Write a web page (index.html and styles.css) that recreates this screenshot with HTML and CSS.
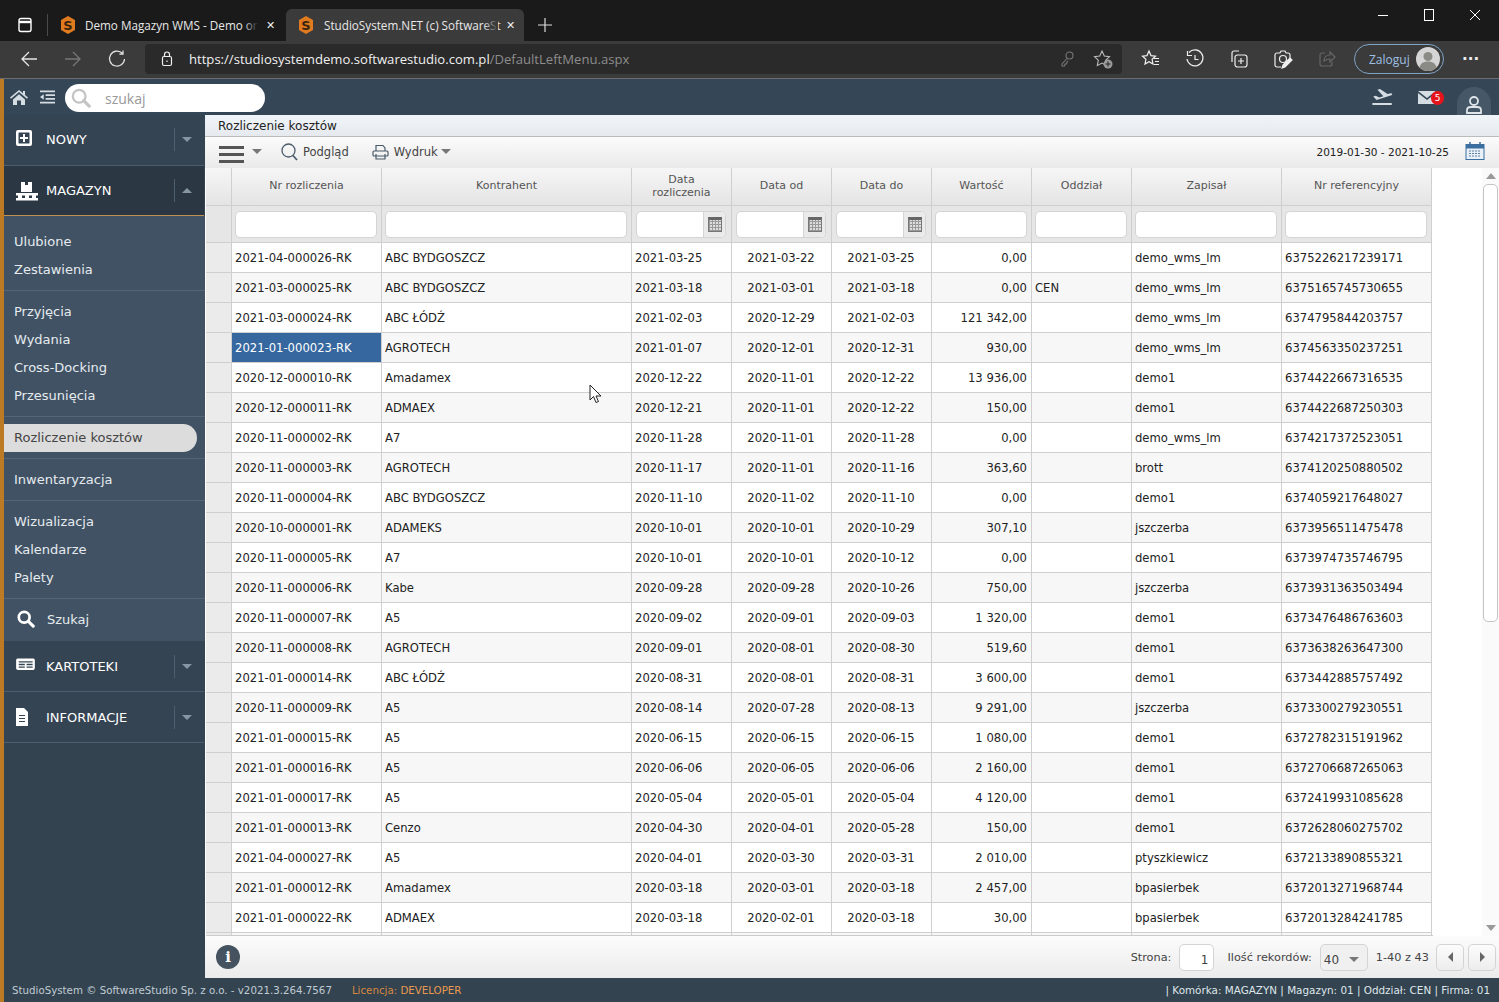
FILE: index.html
```html
<!DOCTYPE html>
<html lang="pl">
<head>
    <meta charset="UTF-8">
    <meta name="viewport" content="width=device-width, initial-scale=1.0">
    <title>StudioSystem.NET (c) SoftwareStudio</title>
    <link rel="stylesheet" href="styles.css">
</head>
<body>
    <div class="tabstrip">
        <svg class="tab-actions" width="16" height="16" viewBox="0 0 16 16" fill="none" stroke="#fff" stroke-width="1.4"><rect x="2" y="1.5" width="12" height="13" rx="2"/><path d="M2 5h12" stroke-width="2.4"/></svg>
        <span class="tab-sep"></span>
        <div class="tab">
            <svg class="favicon" width="16" height="20" viewBox="0 0 16 20"><polygon points="8,1 15,5 15,15 8,19 1,15 1,5" fill="#e07a1f"/><text x="8" y="15" text-anchor="middle" class="favicon-s">S</text></svg>
            <span class="tab-title">Demo Magazyn WMS - Demo or</span>
            <span class="tab-fade"></span>
            <span class="tab-close">✕</span>
        </div>
        <div class="tab tab-active">
            <svg class="favicon" width="16" height="20" viewBox="0 0 16 20"><polygon points="8,1 15,5 15,15 8,19 1,15 1,5" fill="#e07a1f"/><text x="8" y="15" text-anchor="middle" class="favicon-s">S</text></svg>
            <span class="tab-title">StudioSystem.NET (c) SoftwareSt</span>
            <span class="tab-fade"></span>
            <span class="tab-close">✕</span>
        </div>
        <svg class="tab-new" width="16" height="16" viewBox="0 0 16 16" stroke="#ddd" stroke-width="1.2"><path d="M8 1v14M1 8h14"/></svg>
        <div class="window-controls">
            <svg width="12" height="12" viewBox="0 0 12 12" stroke="#fff"><path d="M1 6.5h10"/></svg>
            <svg width="12" height="12" viewBox="0 0 12 12" fill="none" stroke="#fff"><rect x="1.5" y="0.5" width="9" height="11"/></svg>
            <svg width="12" height="12" viewBox="0 0 12 12" stroke="#fff"><path d="M1 1l10 10M11 1L1 11"/></svg>
        </div>
    </div>

    <div class="addressbar">
        <svg class="nav-icon" width="18" height="18" viewBox="0 0 18 18" fill="none" stroke="#e6e6e6" stroke-width="1.3"><path d="M17 9H2M9 2L2 9l7 7"/></svg>
        <svg class="nav-icon" width="18" height="18" viewBox="0 0 18 18" fill="none" stroke="#777" stroke-width="1.3"><path d="M1 9h15M9 2l7 7-7 7"/></svg>
        <svg class="nav-icon" width="18" height="18" viewBox="0 0 18 18" fill="none" stroke="#e6e6e6" stroke-width="1.2"><path d="M14.5 3.5A7.5 7.5 0 1 0 16.5 9M15 0.5v3.6h-3.6"/></svg>
        <div class="urlbox">
            <svg class="url-lock" width="12" height="16" viewBox="0 0 12 16" fill="none" stroke="#eee" stroke-width="1.2"><rect x="1.5" y="5.5" width="9" height="9" rx="1.5"/><path d="M3.5 5.5V3.5a2.5 2.5 0 0 1 5 0v2"/><path d="M6 9.5V11"/></svg>
            <span class="url-text">https://studiosystemdemo.softwarestudio.com.pl<span class="url-dim">/DefaultLeftMenu.aspx</span></span>
            <svg class="url-key" width="14" height="16" viewBox="0 0 14 16" fill="none" stroke="#777" stroke-width="1.1"><circle cx="9.5" cy="4.5" r="3.5"/><path d="M7 7.5L2 13v2h2.5l.5-2h1.500l.5-2 1-1"/></svg>
            <svg class="url-star" width="20" height="20" viewBox="0 0 20 20" fill="none" stroke="#bbb" stroke-width="1.1"><path d="M9 2l2.300 5 5.200.6-3.800 3.600 1 5.300L9 14l-4.700 2.500 1-5.300L1.500 7.600 6.700 7z"/><circle cx="15" cy="15" r="4.5" fill="#999" stroke="none"/><path d="M15 12.5v5M12.5 15h5" stroke="#2a2a2a"/></svg>
        </div>
        <div class="browser-tools">
            <svg width="20" height="20" viewBox="0 0 20 20" fill="none" stroke="#eee" stroke-width="1.2"><path d="M8 2l2 4.600 4.500.5-3.400 3.200.9 4.800L8 12.700l-4 2.400.9-4.800L1.500 7.100 6 6.600z"/><path d="M13 9.5h5M14 12.500h4M13 15.500h5"/></svg>
            <svg width="20" height="20" viewBox="0 0 20 20" fill="none" stroke="#eee" stroke-width="1.2"><path d="M4 3.500A8 8 0 1 1 2 10"/><path d="M2.500 2v4.500H7"/><path d="M10 6v4.500h3.500"/></svg>
            <svg width="20" height="20" viewBox="0 0 20 20" fill="none" stroke="#eee" stroke-width="1.2"><path d="M3 13V4a2 2 0 0 1 2-2h5"/><rect x="6" y="6" width="12" height="12" rx="2.5"/><path d="M12 9v6M9 12h6"/></svg>
            <svg width="20" height="20" viewBox="0 0 20 20" fill="none" stroke="#eee" stroke-width="1.2"><path d="M7 4l1-2h4l1 2h2a2 2 0 0 1 2 2v3M8 18H4a2 2 0 0 1-2-2V6a2 2 0 0 1 2-2h3"/><circle cx="10" cy="10" r="3.5"/><path d="M10 16l7-7 2 2-7 7-3 1z" fill="#eee"/></svg>
            <svg width="20" height="20" viewBox="0 0 20 20" fill="none" stroke="#666" stroke-width="1.2"><path d="M8 4H5a2 2 0 0 0-2 2v9a2 2 0 0 0 2 2h8a2 2 0 0 0 2-2v-2"/><path d="M7 12c0-4 3-6 6-6V3l5 5-5 5v-3c-2 0-4 .5-6 2z"/></svg>
        </div>
        <div class="profile-pill">
            <span>Zaloguj</span>
            <svg width="24" height="24" viewBox="0 0 24 24"><circle cx="12" cy="12" r="12" fill="#d5d5d5"/><circle cx="12" cy="9.5" r="4.5" fill="#8b8b85"/><path d="M3.500 20.500c1-4.500 4.500-6 8.500-6s7.500 1.500 8.500 6a12 12 0 0 1-17 0z" fill="#8b8b85"/></svg>
        </div>
        <span class="browser-menu">···</span>
    </div>

    <div class="app">
        <div class="topbar">
            <svg class="top-icon" width="18" height="16" viewBox="0 0 18 16" fill="#d5dce2"><path d="M9 1L0 8.500l1 1.200L9 3l8 6.700 1-1.200-3-2.500V2h-2v2.300zM3 10.500V16h4v-4.500h4V16h4v-5.500L9 5.200z"/></svg>
            <svg class="top-icon top-list" width="15" height="14" viewBox="0 0 16 14" fill="#d5dce2"><path d="M0 0h16v2H0zM6 4h10v2H6zM6 8h10v2H6zM0 12h16v2H0zM4 4v6L0 7z"/></svg>
            <div class="top-search">
                <svg width="20" height="20" viewBox="0 0 22 22" fill="none" stroke="#c4c4c4"><circle cx="9" cy="9" r="7" stroke-width="2.5"/><path d="M14 14l6 6" stroke-width="3.5" stroke-linecap="round"/></svg>
                <span>szukaj</span>
            </div>
            <div class="top-right">
                <svg width="21" height="16" viewBox="0 0 24 19" fill="#d5dce2"><path d="M0 16.500h23V19H0zM1 9l3-1 4 2 5-1.500L6 1l3-1 9 6 4-1c2 0 2 2 .5 2.500L5 13z"/></svg>
                <div class="mail">
                    <svg width="18" height="13" viewBox="0 0 18 13" fill="#d5dce2"><path d="M0 0h18L9 7zM0 2l9 7 9-7v11H0z"/></svg>
                    <span class="mail-badge">5</span>
                </div>
                <div class="user-btn">
                    <svg width="16" height="18" viewBox="0 0 16 18" fill="none" stroke="#dfe5ea" stroke-width="1.8"><circle cx="8" cy="5" r="4"/><path d="M1 17v-3c0-2 2-3 4-3h6c2 0 4 1 4 3v3z"/></svg>
                </div>
            </div>
        </div>

        <div class="layout">
            <nav class="sidebar">
                <div class="nav-head">
                    <svg class="nav-head-icon" width="22" height="20" viewBox="2 1 22 20" fill="#fff"><path fill-rule="evenodd" d="M4 2h12a2 2 0 0 1 2 2v12a2 2 0 0 1-2 2H4a2 2 0 0 1-2-2V4a2 2 0 0 1 2-2zm1 2.500a.5.5 0 0 0-.5.5v10a.5.5 0 0 0 .5.5h10a.5.5 0 0 0 .5-.5V5a.5.5 0 0 0-.5-.5zM9 6h2v3h3v2h-3v3H9v-3H6V9h3z"/></svg>
                    <span class="nav-head-label">NOWY</span>
                    <span class="nav-caret"><i class="caret-down"></i></span>
                </div>
                <div class="nav-head nav-head-open">
                    <svg class="nav-head-icon" width="22" height="20" viewBox="0 0 22 20" fill="#fff"><path d="M5 1h4v3h3V1h4v10H5zM0 12h22v2.500H0zM0 17h22v2.500H0zM2 14h4v3H2zM9 14h4v3H9zM16 14h4v3h-4z"/></svg>
                    <span class="nav-head-label">MAGAZYN</span>
                    <span class="nav-caret"><i class="caret-up"></i></span>
                </div>
                <div class="nav-group nav-group-first">
                    <a>Ulubione</a>
                    <a>Zestawienia</a>
                </div>
                <div class="nav-group">
                    <a>Przyjęcia</a>
                    <a>Wydania</a>
                    <a>Cross-Docking</a>
                    <a>Przesunięcia</a>
                </div>
                <div class="nav-group">
                    <a class="nav-current">Rozliczenie kosztów</a>
                </div>
                <div class="nav-group">
                    <a>Inwentaryzacja</a>
                </div>
                <div class="nav-group">
                    <a>Wizualizacja</a>
                    <a>Kalendarze</a>
                    <a>Palety</a>
                </div>
                <div class="nav-search">
                    <svg width="18" height="18" viewBox="0 0 20 20" fill="none" stroke="#fff"><circle cx="8" cy="8" r="6" stroke-width="3"/><path d="M12.500 12.500l5.500 5.500" stroke-width="3.5" stroke-linecap="round"/></svg>
                    <span>Szukaj</span>
                </div>
                <div class="nav-head">
                    <svg class="nav-head-icon" width="22" height="20" viewBox="0 0 25 23" fill="#fff"><path fill-rule="evenodd" d="M2 3h18a2 2 0 0 1 1.500 1.500v10A2 2 0 0 1 20 16H2a2 2 0 0 1-2-1.500v-10A2 2 0 0 1 2 3zm1 3v1.500h16V6zm0 3v1.500h7V9zm9 0v1.500h7V9zm-9 3v1.500h7V12zm9 0v1.500h7V12z"/></svg>
                    <span class="nav-head-label">KARTOTEKI</span>
                    <span class="nav-caret"><i class="caret-down"></i></span>
                </div>
                <div class="nav-head">
                    <svg class="nav-head-icon" width="22" height="20" viewBox="2 0 22 20" fill="#fff"><path fill-rule="evenodd" d="M2 1h8l4 4v14H2zM5 8v1h6V8zm0 3v1h6v-1zm0 3v1h6v-1z"/></svg>
                    <span class="nav-head-label">INFORMACJE</span>
                    <span class="nav-caret"><i class="caret-down"></i></span>
                </div>
            </nav>

            <main class="content">
                <div class="page-title">Rozliczenie kosztów</div>
                <div class="toolbar">
                    <span class="hamburger"><i></i><i></i><i></i></span>
                    <i class="caret-gray hamburger-caret"></i>
                    <svg class="tool-icon" width="17" height="18" viewBox="0 0 17 18" fill="none" stroke="#4a5b6b" stroke-width="1.3"><circle cx="7.5" cy="7.5" r="6.5"/><path d="M12 12.500l4 4.500" stroke-width="1.8"/></svg>
                    <span class="tool-label">Podgląd</span>
                    <svg class="tool-icon tool-print" width="17" height="16" viewBox="0 0 17 16" fill="none" stroke="#4a5b6b" stroke-width="1.2"><path d="M4 7V1.500h7L13 4v3"/><rect x="1" y="7" width="15" height="5" rx="1"/><path d="M4 10v5h9v-5"/></svg>
                    <span class="tool-label">Wydruk</span>
                    <i class="caret-gray"></i>
                    <span class="date-range">2019-01-30 - 2021-10-25</span>
                    <svg class="date-icon" width="20" height="18" viewBox="0 0 20 18"><rect x="1" y="2.5" width="18" height="15" fill="#e8f1fa" stroke="#3b6f9f"/><rect x="1" y="2.5" width="18" height="4" fill="#3b6f9f"/><path d="M5 0v4M15 0v4" stroke="#3b6f9f" stroke-width="1.5"/><path d="M4 9h12M4 11.500h12M4 14h12" stroke="#5f7f9f" stroke-dasharray="2 1"/></svg>
                </div>

                <div class="grid-area">
                    <div class="grid-wrap">
                        <table class="grid">
                            <colgroup>
                                <col class="w-gutter"><col class="w-150"><col class="w-250"><col class="w-100"><col class="w-100"><col class="w-100"><col class="w-100"><col class="w-100"><col class="w-150"><col class="w-150">
                            </colgroup>
                            <thead>
                                <tr class="head-row">
                                    <th></th><th>Nr rozliczenia</th><th>Kontrahent</th><th>Data<br>rozliczenia</th><th>Data od</th><th>Data do</th><th>Wartość</th><th>Oddział</th><th>Zapisał</th><th>Nr referencyjny</th>
                                </tr>
                                <tr class="filter-row">
                                    <td></td>
                                    <td><div class="filter"></div></td>
                                    <td><div class="filter"></div></td>
                                    <td><div class="filter filter-date"><span class="cal-btn"><i class="cal-glyph"></i></span></div></td>
                                    <td><div class="filter filter-date"><span class="cal-btn"><i class="cal-glyph"></i></span></div></td>
                                    <td><div class="filter filter-date"><span class="cal-btn"><i class="cal-glyph"></i></span></div></td>
                                    <td><div class="filter"></div></td>
                                    <td><div class="filter"></div></td>
                                    <td><div class="filter"></div></td>
                                    <td><div class="filter"></div></td>
                                </tr>
                            </thead>
                            <tbody>
                                <tr><td></td><td>2021-04-000026-RK</td><td>ABC BYDGOSZCZ</td><td>2021-03-25</td><td class="c">2021-03-22</td><td class="c">2021-03-25</td><td class="r">0,00</td><td></td><td>demo_wms_lm</td><td>6375226217239171</td></tr>
                                <tr><td></td><td>2021-03-000025-RK</td><td>ABC BYDGOSZCZ</td><td>2021-03-18</td><td class="c">2021-03-01</td><td class="c">2021-03-18</td><td class="r">0,00</td><td>CEN</td><td>demo_wms_lm</td><td>6375165745730655</td></tr>
                                <tr><td></td><td>2021-03-000024-RK</td><td>ABC ŁÓDŹ</td><td>2021-02-03</td><td class="c">2020-12-29</td><td class="c">2021-02-03</td><td class="r">121 342,00</td><td></td><td>demo_wms_lm</td><td>6374795844203757</td></tr>
                                <tr><td></td><td class="selected">2021-01-000023-RK</td><td>AGROTECH</td><td>2021-01-07</td><td class="c">2020-12-01</td><td class="c">2020-12-31</td><td class="r">930,00</td><td></td><td>demo_wms_lm</td><td>6374563350237251</td></tr>
                                <tr><td></td><td>2020-12-000010-RK</td><td>Amadamex</td><td>2020-12-22</td><td class="c">2020-11-01</td><td class="c">2020-12-22</td><td class="r">13 936,00</td><td></td><td>demo1</td><td>6374422667316535</td></tr>
                                <tr><td></td><td>2020-12-000011-RK</td><td>ADMAEX</td><td>2020-12-21</td><td class="c">2020-11-01</td><td class="c">2020-12-22</td><td class="r">150,00</td><td></td><td>demo1</td><td>6374422687250303</td></tr>
                                <tr><td></td><td>2020-11-000002-RK</td><td>A7</td><td>2020-11-28</td><td class="c">2020-11-01</td><td class="c">2020-11-28</td><td class="r">0,00</td><td></td><td>demo_wms_lm</td><td>6374217372523051</td></tr>
                                <tr><td></td><td>2020-11-000003-RK</td><td>AGROTECH</td><td>2020-11-17</td><td class="c">2020-11-01</td><td class="c">2020-11-16</td><td class="r">363,60</td><td></td><td>brott</td><td>6374120250880502</td></tr>
                                <tr><td></td><td>2020-11-000004-RK</td><td>ABC BYDGOSZCZ</td><td>2020-11-10</td><td class="c">2020-11-02</td><td class="c">2020-11-10</td><td class="r">0,00</td><td></td><td>demo1</td><td>6374059217648027</td></tr>
                                <tr><td></td><td>2020-10-000001-RK</td><td>ADAMEKS</td><td>2020-10-01</td><td class="c">2020-10-01</td><td class="c">2020-10-29</td><td class="r">307,10</td><td></td><td>jszczerba</td><td>6373956511475478</td></tr>
                                <tr><td></td><td>2020-11-000005-RK</td><td>A7</td><td>2020-10-01</td><td class="c">2020-10-01</td><td class="c">2020-10-12</td><td class="r">0,00</td><td></td><td>demo1</td><td>6373974735746795</td></tr>
                                <tr><td></td><td>2020-11-000006-RK</td><td>Kabe</td><td>2020-09-28</td><td class="c">2020-09-28</td><td class="c">2020-10-26</td><td class="r">750,00</td><td></td><td>jszczerba</td><td>6373931363503494</td></tr>
                                <tr><td></td><td>2020-11-000007-RK</td><td>A5</td><td>2020-09-02</td><td class="c">2020-09-01</td><td class="c">2020-09-03</td><td class="r">1 320,00</td><td></td><td>demo1</td><td>6373476486763603</td></tr>
                                <tr><td></td><td>2020-11-000008-RK</td><td>AGROTECH</td><td>2020-09-01</td><td class="c">2020-08-01</td><td class="c">2020-08-30</td><td class="r">519,60</td><td></td><td>demo1</td><td>6373638263647300</td></tr>
                                <tr><td></td><td>2021-01-000014-RK</td><td>ABC ŁÓDŹ</td><td>2020-08-31</td><td class="c">2020-08-01</td><td class="c">2020-08-31</td><td class="r">3 600,00</td><td></td><td>demo1</td><td>6373442885757492</td></tr>
                                <tr><td></td><td>2020-11-000009-RK</td><td>A5</td><td>2020-08-14</td><td class="c">2020-07-28</td><td class="c">2020-08-13</td><td class="r">9 291,00</td><td></td><td>jszczerba</td><td>6373300279230551</td></tr>
                                <tr><td></td><td>2021-01-000015-RK</td><td>A5</td><td>2020-06-15</td><td class="c">2020-06-15</td><td class="c">2020-06-15</td><td class="r">1 080,00</td><td></td><td>demo1</td><td>6372782315191962</td></tr>
                                <tr><td></td><td>2021-01-000016-RK</td><td>A5</td><td>2020-06-06</td><td class="c">2020-06-05</td><td class="c">2020-06-06</td><td class="r">2 160,00</td><td></td><td>demo1</td><td>6372706687265063</td></tr>
                                <tr><td></td><td>2021-01-000017-RK</td><td>A5</td><td>2020-05-04</td><td class="c">2020-05-01</td><td class="c">2020-05-04</td><td class="r">4 120,00</td><td></td><td>demo1</td><td>6372419931085628</td></tr>
                                <tr><td></td><td>2021-01-000013-RK</td><td>Cenzo</td><td>2020-04-30</td><td class="c">2020-04-01</td><td class="c">2020-05-28</td><td class="r">150,00</td><td></td><td>demo1</td><td>6372628060275702</td></tr>
                                <tr><td></td><td>2021-04-000027-RK</td><td>A5</td><td>2020-04-01</td><td class="c">2020-03-30</td><td class="c">2020-03-31</td><td class="r">2 010,00</td><td></td><td>ptyszkiewicz</td><td>6372133890855321</td></tr>
                                <tr><td></td><td>2021-01-000012-RK</td><td>Amadamex</td><td>2020-03-18</td><td class="c">2020-03-01</td><td class="c">2020-03-18</td><td class="r">2 457,00</td><td></td><td>bpasierbek</td><td>6372013271968744</td></tr>
                                <tr><td></td><td>2021-01-000022-RK</td><td>ADMAEX</td><td>2020-03-18</td><td class="c">2020-02-01</td><td class="c">2020-03-18</td><td class="r">30,00</td><td></td><td>bpasierbek</td><td>6372013284241785</td></tr>
                                <tr><td></td><td></td><td></td><td></td><td></td><td></td><td></td><td></td><td></td><td></td></tr>
                            </tbody>
                        </table>
                    </div>
                    <div class="scrollbar">
                        <i class="scroll-up"></i>
                        <div class="scroll-track"><div class="scroll-thumb"></div></div>
                        <i class="scroll-down"></i>
                    </div>
                </div>

                <div class="pager">
                    <span class="info-btn">i</span>
                    <span class="pager-label pager-first">Strona:</span>
                    <span class="page-input">1</span>
                    <span class="pager-label">Ilość rekordów:</span>
                    <span class="page-select">40<i class="caret-gray"></i></span>
                    <span class="pager-label">1-40 z 43</span>
                    <span class="page-btn"><i class="tri-left"></i></span>
                    <span class="page-btn"><i class="tri-right"></i></span>
                </div>
            </main>
        </div>

        <footer class="statusbar">
            <span>StudioSystem © SoftwareStudio Sp. z o.o. - v2021.3.264.7567</span>
            <span class="license">Licencja: <b>DEVELOPER</b></span>
            <span class="status-right">| Komórka: MAGAZYN | Magazyn: 01 | Oddział: CEN | Firma: 01</span>
        </footer>
    </div>

    <svg class="cursor" width="14" height="20" viewBox="0 0 14 20"><path d="M1 1v15l3.500-3.500L7 18.500l2.500-1-2.500-5.500h5z" fill="#fff" stroke="#222" stroke-width="1"/></svg>
</body>
</html>
```

FILE: styles.css
```css
* {
    box-sizing: border-box;
}
html, body {
    height: 100%;
}
body {
    margin: 0;
    display: flex;
    flex-direction: column;
    overflow: hidden;
    position: relative;
    font-family: "DejaVu Sans", sans-serif;
    font-size: 11.6px;
    color: #222;
    background-color: #fff;
}

/* browser chrome */
.tabstrip {
    height: 41px;
    flex: none;
    display: flex;
    align-items: flex-end;
    background-color: #1a1a1a;
    font-family: "Open Sans", sans-serif;
    color: #e8e8e8;
}
.tab-actions {
    margin: 0 14px 8px 17px;
}
.tab-sep {
    width: 1px;
    height: 22px;
    margin: 0 6px 5px 0;
    background-color: #4a4a4a;
}
.tab {
    position: relative;
    width: 232px;
    height: 32px;
    padding: 0 8px 0 6px;
    display: flex;
    align-items: center;
    border-radius: 6px 6px 0 0;
    font-size: 11.7px;
}
.tab-active {
    width: 238px;
    padding-left: 12px;
    background-color: #3b3b3b;
}
.favicon-s {
    font: bold 13px "DejaVu Sans", sans-serif;
    fill: #3a2410;
}
.tab-title {
    margin-left: 9px;
    width: 173px;
    white-space: nowrap;
}
.tab-active .tab-title {
    margin-left: 10px;
    width: 174px;
}
.tab-fade {
    width: 14px;
    height: 20px;
    margin-left: -14px;
    background: linear-gradient(to right, rgba(26,26,26,0), #1a1a1a);
}
.tab-active .tab-fade {
    background: linear-gradient(to right, rgba(59,59,59,0), #3b3b3b);
}
.tab-close {
    margin-left: 8px;
    font: 11px "DejaVu Sans", sans-serif;
    color: #eee;
}
.tab-new {
    margin: 0 0 8px 13px;
}
.window-controls {
    margin-left: auto;
    align-self: flex-start;
    padding: 9px 18px 0 0;
    display: flex;
    gap: 34px;
}
.addressbar {
    height: 38px;
    flex: none;
    display: flex;
    align-items: center;
    padding: 0 0 1px 20px;
    background-color: #3b3b3b;
    border-bottom: 1px solid #6d6d6d;
}
.nav-icon {
    margin-right: 26px;
}
.nav-icon:nth-child(3) {
    margin-right: 19px;
}
.urlbox {
    width: 977px;
    height: 30px;
    display: flex;
    align-items: center;
    padding: 0 9px 0 16px;
    background-color: #2a2a2a;
    border-radius: 4px;
    font-family: "Open Sans", sans-serif;
    font-size: 13.1px;
    color: #f0f0f0;
}
.url-text {
    margin-left: 16px;
}
.url-dim {
    color: #8d8d8d;
}
.url-key {
    margin-left: auto;
    margin-right: 19px;
}
.browser-tools {
    width: 232px;
    display: flex;
    gap: 24px;
    padding-left: 19px;
}
.profile-pill {
    width: 90px;
    height: 30px;
    display: flex;
    align-items: center;
    justify-content: space-between;
    padding: 0 3px 0 14px;
    border: 1px solid #7fa3c4;
    border-radius: 15px;
    font-family: "Open Sans", sans-serif;
    font-size: 12px;
    color: #9fc0e4;
}
.browser-menu {
    margin-left: 18px;
    font: bold 15px "DejaVu Sans", sans-serif;
    color: #eee;
}

/* application */
.app {
    flex: 1;
    min-height: 0;
    display: flex;
    flex-direction: column;
    border-left: 4px solid #bd7a24;
    background-color: #33434f;
}
.topbar {
    height: 36px;
    flex: none;
    display: flex;
    align-items: center;
    padding-left: 6px;
    background-color: #354657;
}
.top-icon {
    margin-right: 11px;
}
.top-list {
    margin-right: 10px;
    margin-left: 1px;
}
.top-search {
    width: 200px;
    height: 28px;
    margin-top: 2px;
    padding-left: 6px;
    display: flex;
    align-items: center;
    gap: 14px;
    background-color: #fff;
    border-radius: 14px;
    font-family: "Open Sans", sans-serif;
    font-size: 14px;
    color: #999;
}
.top-right {
    margin-left: auto;
    display: flex;
    align-items: center;
    gap: 25px;
}
.mail {
    position: relative;
    height: 13px;
    display: flex;
    margin-right: 4px;
}
.mail-badge {
    position: absolute;
    left: 13px;
    top: 0;
    width: 13px;
    height: 14px;
    border-radius: 7px;
    background-color: #e8141c;
    color: #fff;
    font-size: 9px;
    line-height: 14px;
    text-align: center;
}
.user-btn {
    width: 34px;
    height: 34px;
    margin: 8px 8px -6px -8px;
    padding-top: 9px;
    display: flex;
    justify-content: center;
    background-color: #465868;
    border-radius: 17px 17px 0 0;
}
.layout {
    flex: 1;
    min-height: 0;
    display: flex;
}

/* left menu */
.sidebar {
    width: 201px;
    flex: none;
    background-color: #33434f;
    font-size: 13px;
    color: #e6ebef;
}
.nav-head {
    height: 51px;
    display: flex;
    align-items: center;
    padding-left: 12px;
    background-color: #354452;
    border-bottom: 1px solid #4d5f6e;
    margin-right: 1px;
}
.nav-head:first-child {
    padding-bottom: 2px;
}
.nav-head-open {
    height: 50px;
    background-color: #2b3743;
    border-bottom: 1px solid #c09050;
}
.nav-head-icon {
    flex: none;
}
.nav-head-label {
    margin-left: 8px;
    font-size: 13px;
    color: #fff;
}
.nav-caret {
    margin-left: auto;
    margin-right: 6px;
    width: 24px;
    height: 23px;
    display: flex;
    align-items: center;
    justify-content: center;
    border-left: 1px solid #4d5f6e;
}
.caret-down, .caret-up {
    width: 0;
    height: 0;
    border-left: 5px solid transparent;
    border-right: 5px solid transparent;
}
.caret-down {
    border-top: 5px solid #8796a3;
}
.caret-up {
    border-bottom: 5px solid #8796a3;
}
.nav-group {
    padding: 7px 0 6px;
    background-color: #405264;
    border-bottom: 1px solid #536576;
}
.nav-group-first {
    padding-top: 12px;
}
.nav-group a {
    display: block;
    height: 28px;
    line-height: 28px;
    padding-left: 10px;
    color: #e6ebef;
}
.nav-group a.nav-current {
    width: 193px;
    background-color: #dcdcdc;
    border-radius: 0 14px 14px 0;
    color: #444;
}
.nav-search {
    height: 42px;
    display: flex;
    align-items: center;
    gap: 12px;
    padding: 0 0 2px 13px;
    background-color: #405264;
}

/* main panel */
.content {
    flex: 1;
    min-width: 0;
    display: flex;
    flex-direction: column;
    background-color: #fff;
}
.page-title {
    height: 22px;
    flex: none;
    padding-left: 13px;
    line-height: 23px;
    font-size: 12px;
    background: linear-gradient(#f0f5fa, #e6eaef);
    border-bottom: 1px solid #bbb;
}
.toolbar {
    height: 31px;
    flex: none;
    display: flex;
    align-items: center;
    padding: 0 0 2px 14px;
    background: linear-gradient(#fbfbfb, #eaeaea);
    color: #444;
    font-size: 11.5px;
}
.hamburger {
    width: 25px;
    display: flex;
    flex-direction: column;
    gap: 4px;
    margin-top: 5px;
}
.hamburger i {
    height: 3px;
    background-color: #555;
}
.caret-gray {
    width: 0;
    height: 0;
    margin-left: 3px;
    border-left: 5px solid transparent;
    border-right: 5px solid transparent;
    border-top: 5px solid #777;
}
.hamburger-caret {
    margin-left: 8px;
}
.tool-icon {
    margin-left: 19px;
    margin-right: 5px;
}
.tool-print {
    margin-left: 23px;
}
.date-range {
    margin-left: auto;
    font-size: 10.5px;
    color: #222;
}
.date-icon {
    margin: -2px 14px 0 16px;
}
.grid-area {
    flex: 1;
    min-height: 0;
    display: flex;
    padding-left: 1px;
}
.grid-wrap {
    width: 1227px;
    overflow: hidden;
    border-bottom: 1px solid #ccc;
}
.grid {
    width: 1226px;
    border-collapse: separate;
    border-spacing: 0;
    table-layout: fixed;
}
.w-gutter {
    width: 26px;
}
.w-100 {
    width: 100px;
}
.w-150 {
    width: 150px;
}
.w-250 {
    width: 250px;
}
.grid th, .grid td {
    border-right: 1px solid #cfcfcf;
    border-bottom: 1px solid #cfcfcf;
    padding: 0 3px;
    white-space: nowrap;
    overflow: hidden;
}
.head-row th {
    height: 38px;
    padding-bottom: 2px;
    font-weight: normal;
    font-size: 11px;
    line-height: 13px;
    color: #555;
    background: linear-gradient(#f6f6f6, #e4e4e4);
}
.grid .filter-row td {
    height: 37px;
    padding: 0 4px 0 3px;
    background-color: #e6e6e6;
}
.filter {
    height: 27px;
    display: flex;
    justify-content: flex-end;
    background-color: #fff;
    border: 1px solid #d4d4d4;
    border-radius: 5px;
}
.filter-date {
    margin: 0 1px;
}
.cal-btn {
    width: 22px;
    display: flex;
    align-items: center;
    justify-content: center;
    background-color: #eaeaea;
    border-left: 1px solid #d4d4d4;
    border-radius: 0 5px 5px 0;
}
.cal-glyph {
    width: 14px;
    height: 15px;
    border-top: 3px solid #666;
    border-left: 1px solid #777;
    border-right: 1px solid #777;
    border-bottom: 1px solid #777;
    background-color: #ddd;
    background-image: repeating-linear-gradient(90deg, #999 0 1px, transparent 1px 3px), repeating-linear-gradient(0deg, #999 0 1px, transparent 1px 3px);
}
.grid tbody td {
    height: 30px;
}
.grid tbody tr:nth-child(even) td {
    background-color: #f7f7f7;
}
.grid tbody td:first-child, .grid tbody tr:nth-child(even) td:first-child {
    background-color: #ebebeb;
}
.grid tbody td.c {
    text-align: center;
    padding-right: 4px;
}
.grid tbody td.r {
    text-align: right;
    padding-right: 4px;
}
.grid tbody tr td.selected {
    background-color: #36689f;
    color: #fff;
}
.scrollbar {
    margin-left: auto;
    width: 17px;
    display: flex;
    flex-direction: column;
    align-items: center;
    background-color: #fafafa;
}
.scroll-up, .scroll-down {
    width: 0;
    height: 0;
    flex: none;
    border-left: 5px solid transparent;
    border-right: 5px solid transparent;
}
.scroll-up {
    margin: 5px 0;
    border-bottom: 6px solid #999;
}
.scroll-down {
    margin: 4px 0 5px;
    border-top: 6px solid #999;
}
.scroll-track {
    flex: 1;
    width: 100%;
}
.scroll-thumb {
    width: 15px;
    height: 438px;
    margin-left: 1px;
    background-color: #fff;
    border: 1px solid #c4c4c4;
    border-radius: 5px;
}

/* pager */
.pager {
    height: 42px;
    flex: none;
    display: flex;
    align-items: center;
    padding: 0 3px 0 11px;
    background: linear-gradient(#fcfcfc, #ebebeb);
    font-size: 11.3px;
    color: #444;
}
.info-btn {
    width: 24px;
    height: 24px;
    border-radius: 12px;
    background-color: #44535f;
    color: #fff;
    font: bold 15px/24px "DejaVu Serif", serif;
    text-align: center;
}
.pager-first {
    margin-left: auto;
}
.page-input, .page-select, .page-btn {
    height: 27px;
    background-color: #fff;
    border: 1px solid #d4d4d4;
    border-radius: 5px;
    font-size: 12px;
}
.page-input {
    width: 35px;
    margin: 0 13px 0 8px;
    padding: 8px 5px 0 0;
    text-align: right;
}
.page-select {
    width: 48px;
    margin: 0 8px 0 8px;
    padding: 8px 8px 0 3px;
    display: flex;
    justify-content: space-between;
    background-color: #f0f0f0;
}
.page-select .caret-gray {
    margin-top: 4px;
}
.page-btn {
    width: 28px;
    margin-left: 4px;
    display: flex;
    align-items: center;
    justify-content: center;
    background: linear-gradient(#fcfcfc, #ededed);
}
.pager .page-btn:nth-of-type(7) {
    margin-left: 7px;
}
.tri-left, .tri-right {
    width: 0;
    height: 0;
    border-top: 5px solid transparent;
    border-bottom: 5px solid transparent;
}
.tri-left {
    border-right: 5px solid #666;
}
.tri-right {
    border-left: 5px solid #666;
}

/* status bar */
.statusbar {
    height: 24px;
    flex: none;
    display: flex;
    align-items: center;
    padding: 0 9px 0 8px;
    background-color: #33434f;
    font-size: 10.25px;
    color: #c0ccd5;
}
.license {
    margin-left: 20px;
    color: #d8893f;
}
.license b {
    font-weight: normal;
    color: #e8994f;
}
.status-right {
    margin-left: auto;
    font-size: 10.4px;
    color: #dfe6eb;
}

.cursor {
    position: absolute;
    left: 589px;
    top: 384px;
}
```
